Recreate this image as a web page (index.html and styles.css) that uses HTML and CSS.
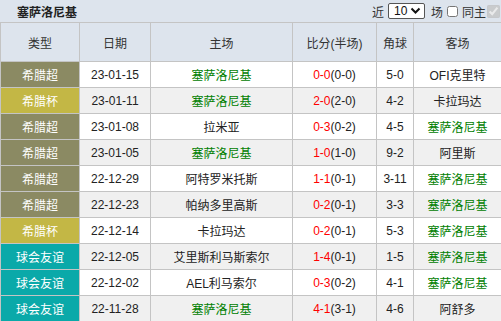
FILE: index.html
```html
<!DOCTYPE html>
<html lang="zh">
<head>
<meta charset="utf-8">
<title>塞萨洛尼基</title>
<link rel="stylesheet" href="styles.css">
</head>
<body>
<div class="panel">
  <div class="titlebar">
    <div class="title">塞萨洛尼基</div>
    <div class="controls">
      <span class="lbl">近</span>
      <div class="select"><span>10</span><svg width="11" height="8" viewBox="0 0 11 8"><path d="M1.5 1.5 L5.5 5.5 L9.5 1.5" fill="none" stroke="#111" stroke-width="2"/></svg></div>
      <span class="lbl">场</span>
      <input type="checkbox" class="cb">
      <span class="lbl">同主</span>
      <input type="checkbox" class="cb cb-on" checked disabled>
    </div>
  </div>
  <table class="games">
    <colgroup>
      <col class="c-type"><col class="c-date"><col class="c-home"><col class="c-score"><col class="c-corner"><col class="c-away">
    </colgroup>
    <thead>
      <tr><th>类型</th><th>日期</th><th>主场</th><th>比分(半场)</th><th>角球</th><th>客场</th></tr>
    </thead>
    <tbody>
      <tr><td class="t-super">希腊超</td><td>23-01-15</td><td class="team">塞萨洛尼基</td><td><span class="ft">0-0</span>(0-0)</td><td>5-0</td><td>OFI克里特</td></tr>
      <tr><td class="t-cup">希腊杯</td><td>23-01-11</td><td class="team">塞萨洛尼基</td><td><span class="ft">2-0</span>(2-0)</td><td>4-2</td><td>卡拉玛达</td></tr>
      <tr><td class="t-super">希腊超</td><td>23-01-08</td><td>拉米亚</td><td><span class="ft">0-3</span>(0-2)</td><td>4-5</td><td class="team">塞萨洛尼基</td></tr>
      <tr><td class="t-super">希腊超</td><td>23-01-05</td><td class="team">塞萨洛尼基</td><td><span class="ft">1-0</span>(1-0)</td><td>9-2</td><td>阿里斯</td></tr>
      <tr><td class="t-super">希腊超</td><td>22-12-29</td><td>阿特罗米托斯</td><td><span class="ft">1-1</span>(0-1)</td><td>3-11</td><td class="team">塞萨洛尼基</td></tr>
      <tr><td class="t-super">希腊超</td><td>22-12-23</td><td>帕纳多里高斯</td><td><span class="ft">0-2</span>(0-1)</td><td>3-3</td><td class="team">塞萨洛尼基</td></tr>
      <tr><td class="t-cup">希腊杯</td><td>22-12-14</td><td>卡拉玛达</td><td><span class="ft">0-2</span>(0-1)</td><td>5-3</td><td class="team">塞萨洛尼基</td></tr>
      <tr><td class="t-friendly">球会友谊</td><td>22-12-05</td><td>艾里斯利马斯索尔</td><td><span class="ft">1-4</span>(0-1)</td><td>1-5</td><td class="team">塞萨洛尼基</td></tr>
      <tr><td class="t-friendly">球会友谊</td><td>22-12-02</td><td>AEL利马索尔</td><td><span class="ft">0-3</span>(0-2)</td><td>4-1</td><td class="team">塞萨洛尼基</td></tr>
      <tr><td class="t-friendly">球会友谊</td><td>22-11-28</td><td class="team">塞萨洛尼基</td><td><span class="ft">4-1</span>(3-1)</td><td>4-6</td><td>阿舒多</td></tr>
    </tbody>
  </table>
</div>
</body>
</html>
```

FILE: styles.css
```css
html, body {
  margin: 0;
  padding: 0;
  background: #ffffff;
}
body {
  font-family: "Liberation Sans", "Noto Sans CJK SC", sans-serif;
  font-size: 12px;
  color: #222222;
}
.panel {
  width: 501px;
  overflow: hidden;
}
.titlebar {
  display: flex;
  align-items: center;
  height: 22px;
  background: #dde4ed;
  padding-left: 17px;
  box-sizing: border-box;
}
.title {
  font-weight: bold;
  font-size: 12px;
  color: #222;
  flex: 1;
}
.controls {
  display: flex;
  align-items: center;
  flex-shrink: 0;
  color: #333;
}
.lbl {
  white-space: nowrap;
}
.select {
  display: flex;
  align-items: center;
  justify-content: space-between;
  width: 37px;
  height: 16px;
  box-sizing: border-box;
  border: 1px solid #555;
  border-radius: 2px;
  background: #fff;
  margin: 0 6px 0 4px;
  padding: 0 3px 0 5px;
  font-size: 12px;
  color: #111;
}
.cb {
  width: 11px;
  height: 11px;
  margin: 1px 4px 0 4px;
}
.cb-on {
  width: 13px;
  height: 13px;
  margin: 0 1px 0 1px;
}
.games {
  width: 501px;
  border-collapse: collapse;
  table-layout: fixed;
}
.c-type { width: 79px; }
.c-date { width: 71px; }
.c-home { width: 142px; }
.c-score { width: 84px; }
.c-corner { width: 37px; }
.c-away { width: 88px; }
.games th, .games td {
  border: 1px solid #c4c4c4;
  text-align: center;
  padding: 0;
  white-space: nowrap;
  overflow: hidden;
}
.games th {
  height: 38px;
  background: #dde4ed;
  font-weight: normal;
  color: #333;
}
.games td {
  height: 25px;
}
.games tbody tr:nth-child(even) td {
  background: #f0f0f0;
}
.games tbody tr td.t-super { background: #8b8a63; color: #fff; }
.games tbody tr td.t-cup { background: #c3b745; color: #fff; }
.games tbody tr td.t-friendly { background: #0aa9a9; color: #fff; }
.team { color: #008000; }
.ft { color: #ff0000; }
```
